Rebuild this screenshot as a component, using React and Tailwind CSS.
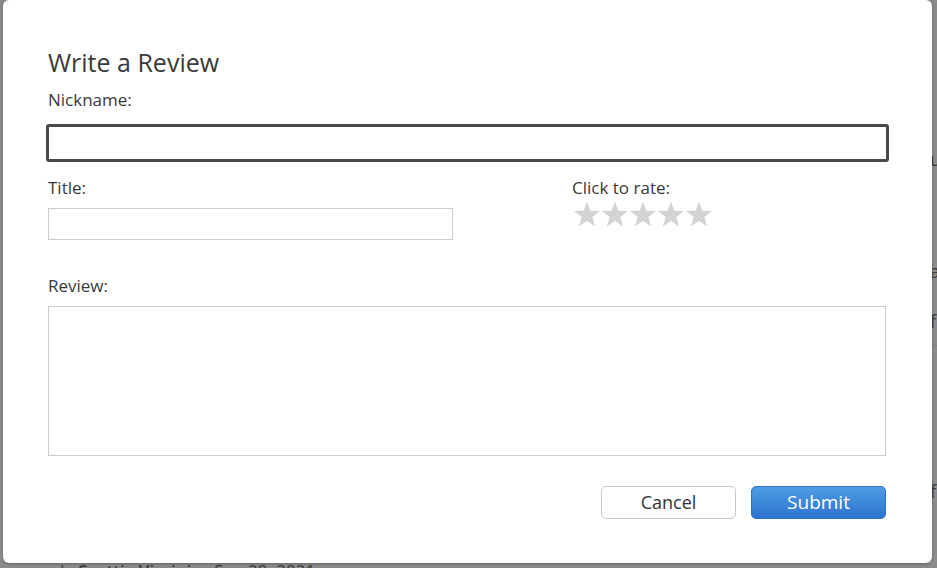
import React from 'react';

function Star() {
  return (
    <svg width="28" height="27" viewBox="0 0 24 23" className="block">
      <polygon
        points="12,0.5 14.9,8.3 23.2,8.6 16.6,13.7 19,21.8 12,17.1 5,21.8 7.4,13.7 0.8,8.6 9.1,8.3"
        fill="#d3d3d3"
      />
    </svg>
  );
}

export default function App() {
  const font = { fontFamily: '"Open Sans", "Noto Sans", sans-serif' };
  return (
    <div className="relative w-[937px] h-[568px] overflow-hidden bg-[#8b8b8b]" style={font}>
      {/* page behind the modal */}
      <div className="absolute left-[930px] top-[146px] text-[18px] text-[#3e3a38]">u</div>
      <div className="absolute left-[930px] top-[258px] text-[18px] text-[#3e3a38]">a</div>
      <div className="absolute left-[930px] top-[308px] text-[18px] text-[#3e3a38]">f</div>
      <div className="absolute left-[930px] top-[478px] text-[18px] text-[#3e3a38]">f</div>
      <div className="absolute left-[926px] top-[345px] w-[11px] h-px bg-[#7e7e7e]" />
      <div className="absolute left-[60px] top-[558px] text-[17px] text-[#3e3a38] whitespace-nowrap">
        le <span className="font-semibold">Scottie Virginia</span> &nbsp; Sep 29, 2021
      </div>

      {/* modal */}
      <div className="absolute left-[3px] top-0 w-[929px] h-[563px] bg-white rounded-[6px] shadow-[0_1px_3px_rgba(0,0,0,0.3)]">
        <div className="pl-[45px] pr-[43px] pt-[45px] text-[#3a3a3a]">
          <h1 className="text-[25px] leading-[34px]">Write a Review</h1>

          <label className="block mt-[10px] text-[17px] leading-[22px]">Nickname:</label>
          <input
            className="block mt-[13px] -ml-[2px] w-[843px] h-[38px] rounded-[3px] border-[3px] border-[#4a4a4a] outline-none"
          />

          <div className="flex mt-[15px]">
            <div className="w-[524px]">
              <label className="block text-[17px] leading-[22px]">Title:</label>
              <input className="block mt-[9px] w-[405px] h-[32px] border border-[#cccccc] outline-none" />
            </div>
            <div>
              <label className="block text-[17px] leading-[22px]">Click to rate:</label>
              <div className="flex mt-[2px] ml-[1px]">
                <Star />
                <Star />
                <Star />
                <Star />
                <Star />
              </div>
            </div>
          </div>

          <label className="block mt-[35px] text-[17px] leading-[22px]">Review:</label>
          <textarea className="block mt-[9px] w-[838px] h-[150px] border border-[#cccccc] outline-none resize-none" />

          <div className="flex justify-end gap-[15px] mt-[30px] pr-[3px]">
            <button className="w-[135px] h-[33px] rounded-[5px] border border-[#c8c8c8] bg-white text-[18px] text-[#333]">
              Cancel
            </button>
            <button className="w-[135px] h-[33px] rounded-[5px] border border-[#2f74c8] bg-gradient-to-b from-[#4f9be3] to-[#2c74cf] text-[19px] text-white">
              Submit
            </button>
          </div>
        </div>
      </div>
    </div>
  );
}
